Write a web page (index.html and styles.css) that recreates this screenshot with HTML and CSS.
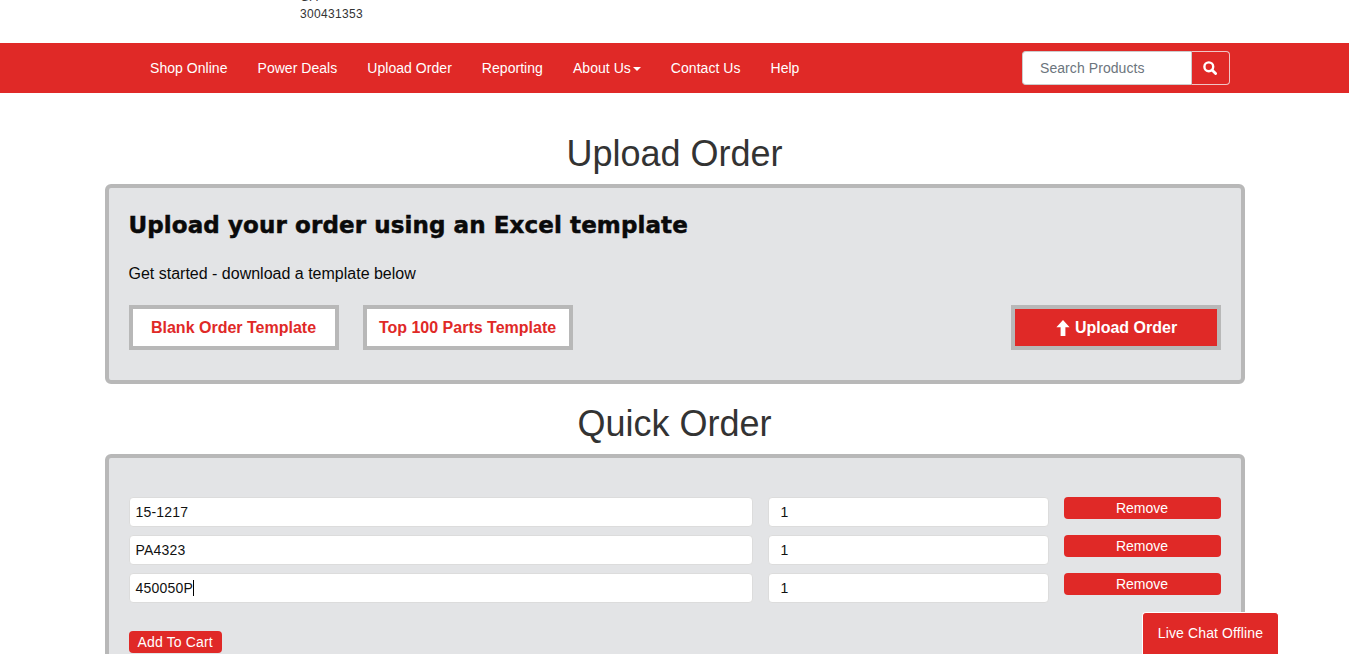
FILE: index.html
```html
<!DOCTYPE html>
<html lang="en">
<head>
  <meta charset="UTF-8">
  <title>Upload Order</title>
  <link rel="stylesheet" href="styles.css">
</head>
<body>
  <header class="topbar">
    <div class="account">
      <span>GA</span>
      <span>300431353</span>
    </div>
  </header>

  <nav class="navbar">
    <div class="nav-inner">
      <ul class="nav-links">
        <li><a href="#">Shop Online</a></li>
        <li><a href="#">Power Deals</a></li>
        <li><a href="#">Upload Order</a></li>
        <li><a href="#">Reporting</a></li>
        <li><a href="#">About Us<span class="caret"></span></a></li>
        <li><a href="#">Contact Us</a></li>
        <li><a href="#">Help</a></li>
      </ul>
      <form class="search">
        <input class="search-input" type="text" placeholder="Search Products">
        <button class="search-btn" type="button" aria-label="Search">
          <svg width="14" height="14" viewBox="0 0 14 14"><circle cx="5.8" cy="5.8" r="4.4" fill="none" stroke="#fff" stroke-width="2.4"/><path d="M9 9l3.6 3.6" stroke="#fff" stroke-width="2.8" stroke-linecap="round"/></svg>
        </button>
      </form>
    </div>
  </nav>

  <main class="container">
    <h1 class="page-title first">Upload Order</h1>
    <section class="panel upload-panel">
      <h2 class="panel-title">Upload your order using an Excel template</h2>
      <p class="panel-text">Get started - download a template below</p>
      <div class="template-row">
        <a class="box-btn" href="#">Blank Order Template</a>
        <a class="box-btn" href="#">Top 100 Parts Template</a>
        <a class="box-btn primary" href="#">
          <svg width="14" height="16" viewBox="0 0 14 16"><path d="M7 0l6.6 7.2H9.4V16H4.6V7.2H.4z" fill="#fff"/></svg>
          Upload Order
        </a>
      </div>
    </section>

    <h1 class="page-title">Quick Order</h1>
    <section class="panel quick-panel">
      <div class="order-row">
        <input class="field" type="text" value="15-1217">
        <input class="field qty" type="text" value="1">
        <button class="small-btn" type="button">Remove</button>
      </div>
      <div class="order-row">
        <input class="field" type="text" value="PA4323">
        <input class="field qty" type="text" value="1">
        <button class="small-btn" type="button">Remove</button>
      </div>
      <div class="order-row">
        <div class="field field-active">450050P<span class="cursor"></span></div>
        <input class="field qty" type="text" value="1">
        <button class="small-btn" type="button">Remove</button>
      </div>
      <button class="small-btn add-cart" type="button">Add To Cart</button>
    </section>
  </main>

  <a class="live-chat" href="#">Live Chat Offline</a>
</body>
</html>
```

FILE: styles.css
```css
* {
  box-sizing: border-box;
}

html, body {
  height: 654px;
  overflow: hidden;
}

body {
  margin: 0;
  background: #fff;
  color: #333;
  font-family: "Liberation Sans", Arial, sans-serif;
  font-size: 14px;
}

a {
  text-decoration: none;
}

/* top strip */
.topbar {
  height: 43px;
  padding: 0 0 20px 300px;
  display: flex;
  align-items: flex-end;
  overflow: hidden;
}

.account {
  display: flex;
  flex-direction: column;
  font-size: 12px;
  line-height: 17px;
  letter-spacing: 0.33px;
}

/* red nav */
.navbar {
  height: 50px;
  background: #e02927;
}

.nav-inner {
  width: 1140px;
  height: 100%;
  margin: 0 auto;
  padding: 0 15px 0 30.5px;
  display: flex;
  align-items: center;
  justify-content: space-between;
}

.nav-links {
  display: flex;
  margin: 0;
  padding: 0;
  list-style: none;
  letter-spacing: 0.04px;
}

.nav-links a {
  display: block;
  padding: 0 15px;
  color: #fff;
  line-height: 50px;
}

.caret {
  display: inline-block;
  margin-left: 2px;
  vertical-align: middle;
  border-top: 4px solid #fff;
  border-left: 4px solid transparent;
  border-right: 4px solid transparent;
}

.search {
  display: flex;
  width: 208px;
  height: 34px;
}

.search-input {
  width: 169px;
  height: 34px;
  padding: 0 12px 0 17.5px;
  border: 1px solid #ccc;
  border-right: 0;
  border-radius: 4px 0 0 4px;
  background: #fff;
  color: #555;
  font: 14px "Liberation Sans", Arial, sans-serif;
  letter-spacing: 0.07px;
}

.search-input::placeholder {
  color: #6c757d;
  opacity: 1;
}

.search-btn {
  width: 39px;
  height: 34px;
  padding: 0;
  display: flex;
  align-items: center;
  justify-content: center;
  background: #e02927;
  border: 1px solid #f0c4c4;
  border-left-color: #ccc;
  border-radius: 0 4px 4px 0;
}

/* page */
.container {
  width: 1140px;
  margin: 0 auto;
}

.page-title {
  margin: 0;
  height: 70px;
  padding-top: 20px;
  color: #333;
  font-size: 36px;
  font-weight: 400;
  line-height: 40px;
  text-align: center;
}

.page-title.first {
  height: 91px;
  padding-top: 41px;
}

.panel {
  padding: 0 20px;
  background: #e3e4e6;
  border: 4px solid #b8b8b8;
  border-radius: 6px;
}

.upload-panel {
  height: 200px;
  padding-top: 22px;
}

.panel-title {
  margin: 0;
  color: #0a0a0a;
  font-family: "DejaVu Sans", "Liberation Sans", sans-serif;
  font-size: 23px;
  font-weight: 700;
  line-height: 30px;
  letter-spacing: 0.1px;
  -webkit-text-stroke: 0.5px #0a0a0a;
}

.panel-text {
  margin: 24px 0 0;
  color: #0a0a0a;
  font-size: 16px;
  line-height: 20px;
}

.template-row {
  display: flex;
  gap: 24px;
  margin-top: 21px;
}

.box-btn {
  width: 210px;
  height: 45px;
  display: flex;
  align-items: center;
  justify-content: center;
  gap: 5px;
  background: #fff;
  border: 4px solid #b8b8b8;
  color: #e02927;
  font-size: 16px;
  font-weight: 700;
}

.box-btn.primary {
  margin-left: auto;
  padding-left: 2px;
  background: #e02927;
  color: #fff;
}

.quick-panel {
  height: 300px;
  padding-top: 39px;
}

.order-row {
  display: grid;
  grid-template-columns: 624px 281px 157px;
  gap: 15px;
  align-items: start;
  margin-bottom: 8px;
}

.field {
  height: 30px;
  padding: 0 6px;
  background: #fff;
  border: 1px solid #dcdcdc;
  border-radius: 4px;
  color: #111;
  font: 14px/28px "Liberation Sans", Arial, sans-serif;
  letter-spacing: 0.2px;
  min-width: 0;
  width: 100%;
}

.field.qty {
  padding-left: 12px;
}

.field-active {
  display: flex;
  align-items: center;
}

.cursor {
  width: 1px;
  height: 16px;
  background: #000;
}

.small-btn {
  height: 22px;
  padding: 0 9px;
  background: #e02927;
  border: 0;
  border-radius: 4px;
  color: #fff;
  font: 14px "Liberation Sans", Arial, sans-serif;
}

.add-cart {
  display: block;
  margin-top: 28px;
  letter-spacing: 0.15px;
}

/* floats over the page */
.live-chat {
  position: fixed;
  right: 70px;
  bottom: 0;
  width: 137px;
  height: 42px;
  padding-top: 12px;
  background: #e02927;
  border: 1px solid #fff;
  border-bottom: 0;
  border-radius: 4px 4px 0 0;
  color: #fff;
  line-height: 17px;
  letter-spacing: 0.12px;
  text-align: center;
}
```
